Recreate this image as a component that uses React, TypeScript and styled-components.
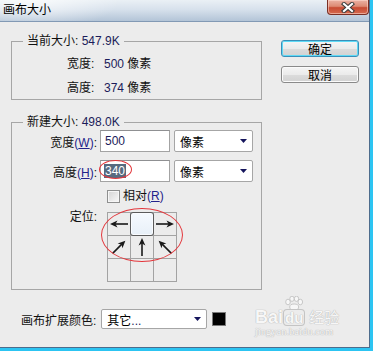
import styled, { createGlobalStyle } from 'styled-components';

const GlobalStyle = createGlobalStyle`
  html, body {
    margin: 0;
    padding: 0;
  }
  body {
    width: 373px;
    height: 351px;
    overflow: hidden;
    background: #ececec;
    font-family: "Liberation Sans", "Noto Sans CJK SC", sans-serif;
    font-size: 12px;
    color: #111;
  }
`;

// ── Window chrome ──────────────────────────────────────────────────────────
const Frame = styled.div`
  position: relative;
  width: 373px;
  height: 351px;
  box-sizing: border-box;
  border-right: 3px solid #2cc4f2;
  border-bottom: 3px solid #2cc4f2;
`;

const Dialog = styled.div`
  height: 100%;
  box-sizing: border-box;
  display: flex;
  flex-direction: column;
  background: #ececec;
  border-right: 1px solid #4d6c8c;
  border-bottom: 1px solid #4d6c8c;
`;

const TitleBar = styled.div`
  flex: 0 0 22px;
  box-sizing: border-box;
  display: flex;
  justify-content: space-between;
  align-items: flex-start;
  padding-left: 3px;
  border-bottom: 1px solid #8299b4;
  background:
    radial-gradient(ellipse 90px 30px at 30px 0, rgba(255, 255, 255, 0.7), rgba(255, 255, 255, 0)),
    linear-gradient(to bottom, #eaf0f5 0%, #d7e1ec 45%, #b3c4d7 100%);
`;

const Title = styled.span`
  line-height: 21px;
  font-size: 12px;
  color: #000;
`;

const CloseButton = styled.div`
  width: 42px;
  height: 15px;
  box-sizing: border-box;
  display: flex;
  align-items: center;
  justify-content: center;
  border: 1px solid #7a2f24;
  border-top: none;
  border-radius: 0 0 4px 4px;
  box-shadow: inset 0 0 0 1px rgba(255, 220, 210, 0.55);
  background: linear-gradient(to bottom, #ebb2a4 0%, #dd8a74 45%, #c84b33 55%, #d56a4f 100%);
`;

const Body = styled.div`
  flex: 1;
  display: grid;
  grid-template-columns: 262px 1fr;
  padding-top: 13px;
`;

const LeftCol = styled.div`
  padding-left: 11px;
  display: flex;
  flex-direction: column;
`;

const RightCol = styled.div`
  padding: 5px 0 0 19px;
  display: flex;
  flex-direction: column;
  gap: 9px;
`;

const PushButton = styled.div<{ $default?: boolean }>`
  width: 78px;
  height: 17px;
  box-sizing: border-box;
  display: flex;
  align-items: center;
  justify-content: center;
  font-size: 12px;
  color: #000;
  border-radius: 3px;
  border: 1px solid ${(p) => (p.$default ? '#3b8fb8' : '#8a8a8a')};
  box-shadow: inset 0 0 0 1px ${(p) => (p.$default ? '#5fdaf6' : '#fbfbfb')};
  background: linear-gradient(to bottom, #f5f5f5 0%, #ebebeb 50%, #dcdcdc 51%, #d2d2d2 100%);
`;

// ── Group boxes ────────────────────────────────────────────────────────────
const Group = styled.fieldset<{ $gapTop?: number }>`
  margin: ${(p) => p.$gapTop ?? 0}px 0 0 0;
  padding: 0;
  width: 251px;
  min-inline-size: 0;
  box-sizing: border-box;
  border: 1px solid #a6a6a6;
`;

const Legend = styled.legend`
  margin-left: 11px;
  padding: 0 4px;
  line-height: 13px;
  font-size: 12px;
  color: #111;
`;

const Latin = styled.span`
  color: #1c1c5a;
`;

const InfoList = styled.div`
  display: flex;
  flex-direction: column;
  gap: 4px;
  padding: 4px 0 3px 55px;
`;

const InfoRow = styled.div`
  display: grid;
  grid-template-columns: 37px auto;
  height: 20px;
  align-items: center;
`;

const FormList = styled.div`
  display: flex;
  flex-direction: column;
  padding: 1px 0 7px 0;
`;

const FieldRow = styled.div<{ $mt?: number }>`
  display: flex;
  align-items: center;
  margin-top: ${(p) => p.$mt ?? 0}px;
`;

const FieldLabel = styled.span`
  width: 85px;
  text-align: right;
  font-size: 12px;
`;

const Mnemonic = styled.span`
  color: #23238a;
  & u {
    text-decoration-thickness: 1px;
    text-underline-offset: 1px;
  }
`;

const TextBox = styled.div`
  position: relative;
  width: 70px;
  height: 22px;
  margin-left: 3px;
  box-sizing: border-box;
  display: flex;
  align-items: center;
  padding-left: 4px;
  background: #fff;
  border: 1px solid #a3a3a3;
  border-top-color: #8f9092;
  color: #1c1c5a;
`;

const Selected = styled.span`
  margin-left: -1px;
  padding: 0 1px;
  line-height: 14px;
  background: #576a7f;
  color: #fff;
`;

const RedRing = styled.div<{ $l: number; $t: number; $w: number; $h: number }>`
  position: absolute;
  left: ${(p) => p.$l}px;
  top: ${(p) => p.$t}px;
  width: ${(p) => p.$w}px;
  height: ${(p) => p.$h}px;
  box-sizing: border-box;
  border: 1.3px solid #e3373c;
  border-radius: 50%;
  pointer-events: none;
`;

const DropDown = styled.div<{ $w: number; $h: number; $ml: number }>`
  width: ${(p) => p.$w}px;
  height: ${(p) => p.$h}px;
  margin-left: ${(p) => p.$ml}px;
  box-sizing: border-box;
  display: flex;
  align-items: center;
  justify-content: space-between;
  padding: 0 5px 0 5px;
  background: #fff;
  border: 1px solid #a6a6a6;
  border-radius: 2px;
  color: #000;
`;

const CheckRow = styled.div`
  display: flex;
  align-items: center;
  height: 13px;
  margin: 8px 0 0 95px;
`;

const CheckBox = styled.div`
  width: 13px;
  height: 13px;
  box-sizing: border-box;
  border: 1px solid #8e8f8f;
  box-shadow: inset 0 0 0 1px #f6f6f6;
  background: linear-gradient(135deg, #d4d4d4 0%, #eeeeee 70%, #f8f8f8 100%);
`;

const CheckText = styled.span`
  margin-left: 3px;
  line-height: 13px;
`;

const AnchorRow = styled.div`
  display: flex;
  align-items: flex-start;
  margin-top: 9px;
`;

const AnchorLabel = styled(FieldLabel)`
  line-height: 13px;
  margin-top: -1px;
`;

const AnchorGrid = styled.div`
  position: relative;
  margin-left: 10px;
  display: grid;
  grid-template-columns: repeat(3, 22px);
  grid-auto-rows: 22px;
  gap: 1px;
  border: 1px solid #a3a3a3;
  background: #a3a3a3;
`;

const Cell = styled.div`
  background: #ececec;
  display: flex;
  align-items: center;
  justify-content: center;
`;

const AnchorKnob = styled.div`
  margin: -1px;
  width: 24px;
  height: 24px;
  box-sizing: border-box;
  border: 1px solid #5c5c5c;
  border-radius: 3px;
  box-shadow: inset 0 0 0 1px #fafcff;
  background: linear-gradient(to bottom, #f6faff 0%, #e8f0f8 100%);
`;

const BottomRow = styled.div`
  display: flex;
  align-items: center;
  margin-top: 19px;
  padding-left: 10px;
`;

const Swatch = styled.div`
  width: 14px;
  height: 14px;
  margin-left: 5px;
  box-sizing: border-box;
  border: 1px solid #7a7a7a;
  background: #000;
`;

// ── Watermark ──────────────────────────────────────────────────────────────
const Watermark = styled.div`
  position: absolute;
  left: 255px;
  top: 296px;
  display: flex;
  flex-direction: column;
  color: #f7f7f7;
  text-shadow: 0 0 1px #b4b4b4, 0 0 1px #b4b4b4;
  pointer-events: none;
`;

const LogoLine = styled.div`
  display: flex;
  align-items: flex-end;
`;

const LogoWord = styled.span`
  font-family: "Liberation Sans", sans-serif;
  font-weight: bold;
  font-size: 18px;
  line-height: 16px;
`;

const DuCol = styled.div`
  display: flex;
  flex-direction: column;
  align-items: center;
  margin-left: 1px;
`;

const DuBox = styled.span`
  font-family: "Liberation Sans", sans-serif;
  font-weight: bold;
  font-size: 15px;
  line-height: 15px;
  padding: 0 1px;
  border-radius: 3px;
  box-shadow: 0 0 0 1px #c4c4c4;
`;

const LogoCn = styled.span`
  margin-left: 5px;
  font-family: "Noto Sans CJK SC", sans-serif;
  font-size: 15px;
  line-height: 16px;
`;

const LogoUrl = styled.span`
  margin-top: 2px;
  font-family: "Liberation Serif", serif;
  font-size: 10.5px;
  line-height: 10px;
`;

function TriangleDown({ w = 7, h = 4 }: { w?: number; h?: number }) {
  return (
    <svg width={w} height={h} viewBox={`0 0 ${w} ${h}`}>
      <polygon points={`0,0 ${w},0 ${w / 2},${h}`} fill="#15155c" />
    </svg>
  );
}

function Arrow({ angle }: { angle: number }) {
  return (
    <svg width="22" height="22" viewBox="0 0 22 22">
      <g transform={`rotate(${angle} 11 11)`}>
        <line x1="2" y1="11" x2="15" y2="11" stroke="#1a1a1a" strokeWidth="1.6" />
        <polygon points="20,11 12.5,7.6 14.5,11 12.5,14.4" fill="#1a1a1a" />
      </g>
    </svg>
  );
}

function Paw() {
  return (
    <svg width="20" height="14" viewBox="0 0 20 14">
      <g fill="#f7f7f7" stroke="#bdbdbd" strokeWidth="0.8">
        <ellipse cx="4" cy="6" rx="2.3" ry="2.8" />
        <ellipse cx="8" cy="2.8" rx="2.2" ry="2.6" />
        <ellipse cx="12.5" cy="2.8" rx="2.2" ry="2.6" />
        <ellipse cx="16.3" cy="6" rx="2.3" ry="2.8" />
        <ellipse cx="10.2" cy="11" rx="4.5" ry="3" />
      </g>
    </svg>
  );
}

export default function App() {
  return (
    <>
      <GlobalStyle />
      <Frame>
        <Dialog>
          <TitleBar>
            <Title>画布大小</Title>
            <CloseButton>
              <svg width="16" height="11" viewBox="0 0 16 11">
                <path d="M4 2 L12 9 M12 2 L4 9" stroke="#3b3b3b" strokeWidth="4.2" strokeLinecap="square" />
                <path d="M4 2 L12 9 M12 2 L4 9" stroke="#ffffff" strokeWidth="2.2" strokeLinecap="square" />
              </svg>
            </CloseButton>
          </TitleBar>

          <Body>
            <LeftCol>
              <Group>
                <Legend>
                  当前大小: <Latin>547.9K</Latin>
                </Legend>
                <InfoList>
                  <InfoRow>
                    <span>宽度:</span>
                    <span>
                      <Latin>500</Latin> 像素
                    </span>
                  </InfoRow>
                  <InfoRow>
                    <span>高度:</span>
                    <span>
                      <Latin>374</Latin> 像素
                    </span>
                  </InfoRow>
                </InfoList>
              </Group>

              <Group $gapTop={16}>
                <Legend>
                  新建大小: <Latin>498.0K</Latin>
                </Legend>
                <FormList>
                  <FieldRow>
                    <FieldLabel>
                      宽度<Mnemonic>(<u>W</u>)</Mnemonic>:
                    </FieldLabel>
                    <TextBox>500</TextBox>
                    <DropDown $w={79} $h={22} $ml={4}>
                      <span>像素</span>
                      <TriangleDown />
                    </DropDown>
                  </FieldRow>
                  <FieldRow $mt={8}>
                    <FieldLabel>
                      高度<Mnemonic>(<u>H</u>)</Mnemonic>:
                    </FieldLabel>
                    <TextBox>
                      <Selected>340</Selected>
                      <RedRing $l={-2} $t={-1} $w={33} $h={19} />
                    </TextBox>
                    <DropDown $w={79} $h={22} $ml={4}>
                      <span>像素</span>
                      <TriangleDown />
                    </DropDown>
                  </FieldRow>
                  <CheckRow>
                    <CheckBox />
                    <CheckText>
                      相对<Mnemonic>(<u>R</u>)</Mnemonic>
                    </CheckText>
                  </CheckRow>
                  <AnchorRow>
                    <AnchorLabel>定位:</AnchorLabel>
                    <AnchorGrid>
                      <Cell>
                        <Arrow angle={180} />
                      </Cell>
                      <Cell>
                        <AnchorKnob />
                      </Cell>
                      <Cell>
                        <Arrow angle={0} />
                      </Cell>
                      <Cell>
                        <Arrow angle={-45} />
                      </Cell>
                      <Cell>
                        <Arrow angle={-90} />
                      </Cell>
                      <Cell>
                        <Arrow angle={-135} />
                      </Cell>
                      <Cell />
                      <Cell />
                      <Cell />
                      <RedRing $l={-7} $t={-5} $w={82} $h={54} />
                    </AnchorGrid>
                  </AnchorRow>
                </FormList>
              </Group>

              <BottomRow>
                <span>画布扩展颜色:</span>
                <DropDown $w={106} $h={20} $ml={5}>
                  <span>
                    其它<Latin>...</Latin>
                  </span>
                  <TriangleDown />
                </DropDown>
                <Swatch />
              </BottomRow>
            </LeftCol>

            <RightCol>
              <PushButton $default>确定</PushButton>
              <PushButton>取消</PushButton>
            </RightCol>
          </Body>
        </Dialog>

        <Watermark>
          <LogoLine>
            <LogoWord>Bai</LogoWord>
            <DuCol>
              <Paw />
              <DuBox>du</DuBox>
            </DuCol>
            <LogoCn>经验</LogoCn>
          </LogoLine>
          <LogoUrl>jingyan.baidu.com</LogoUrl>
        </Watermark>
      </Frame>
    </>
  );
}
